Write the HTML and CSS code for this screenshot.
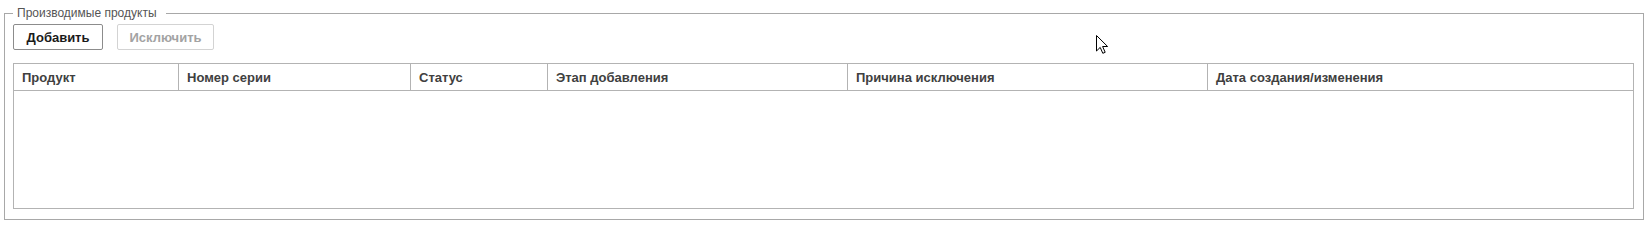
FILE: index.html
```html
<!DOCTYPE html>
<html lang="ru">
<head>
  <meta charset="UTF-8">
  <title>Производимые продукты</title>
  <link rel="stylesheet" href="styles.css">
</head>
<body>
  <fieldset class="group">
    <legend>Производимые продукты</legend>
    <div class="toolbar">
      <button class="btn btn-add">Добавить</button>
      <button class="btn btn-remove" disabled>Исключить</button>
    </div>
    <div class="grid">
      <div class="grid-head">
        <div class="cell">Продукт</div>
        <div class="cell">Номер серии</div>
        <div class="cell">Статус</div>
        <div class="cell">Этап добавления</div>
        <div class="cell">Причина исключения</div>
        <div class="cell">Дата создания/изменения</div>
      </div>
      <div class="grid-body"></div>
    </div>
  </fieldset>

  <!-- указатель мыши -->
  <svg class="cursor" width="13" height="19" viewBox="0 0 13 19">
    <path d="M0.5 0.5 L0.5 16 L4.2 12.4 L6.8 18.3 L9.2 17.3 L6.6 11.5 L11.6 11.5 Z" fill="#fff" stroke="#000" stroke-width="1" stroke-linejoin="miter"/>
  </svg>
</body>
</html>
```

FILE: styles.css
```css
html, body {
  margin: 0;
  background: #fff;
}
body {
  position: relative;
  padding: 6px 1px 0 4px;
  font-family: "Liberation Sans", Arial, sans-serif;
}

/* группа */
.group {
  margin: 0;
  padding: 4px 9px 10px 8px;
  border: 1px solid #a8a8a8;
  min-width: 0;
}
.group legend {
  padding: 0 9px 0 4px;
  font-size: 12px;
  line-height: 14px;
  color: #555;
}

/* кнопки */
.toolbar {
  display: flex;
  gap: 14px;
  margin-bottom: 13px;
}
.btn {
  height: 26px;
  padding: 0;
  font-family: inherit;
  font-size: 13px;
  font-weight: bold;
  background: #fff;
  border-radius: 2px;
}
.btn-add {
  width: 90px;
  border: 1px solid #8c8c8c;
  color: #1a1a1a;
}
.btn-remove {
  width: 97px;
  border: 1px solid #d3d3d3;
  color: #a3a3a3;
}

/* таблица */
.grid {
  border: 1px solid #b3b3b3;
}
.grid-head {
  display: grid;
  grid-template-columns: 165px 232px 137px 300px 360px 1fr;
  border-bottom: 1px solid #b3b3b3;
}
.grid-head .cell {
  height: 26px;
  line-height: 27px;
  padding-left: 8px;
  font-size: 13px;
  font-weight: bold;
  color: #404040;
  border-right: 1px solid #b3b3b3;
  white-space: nowrap;
  overflow: hidden;
}
.grid-head .cell:last-child {
  border-right: none;
}
.grid-body {
  height: 117px;
}

.cursor {
  position: absolute;
  left: 1096px;
  top: 35px;
}
```
